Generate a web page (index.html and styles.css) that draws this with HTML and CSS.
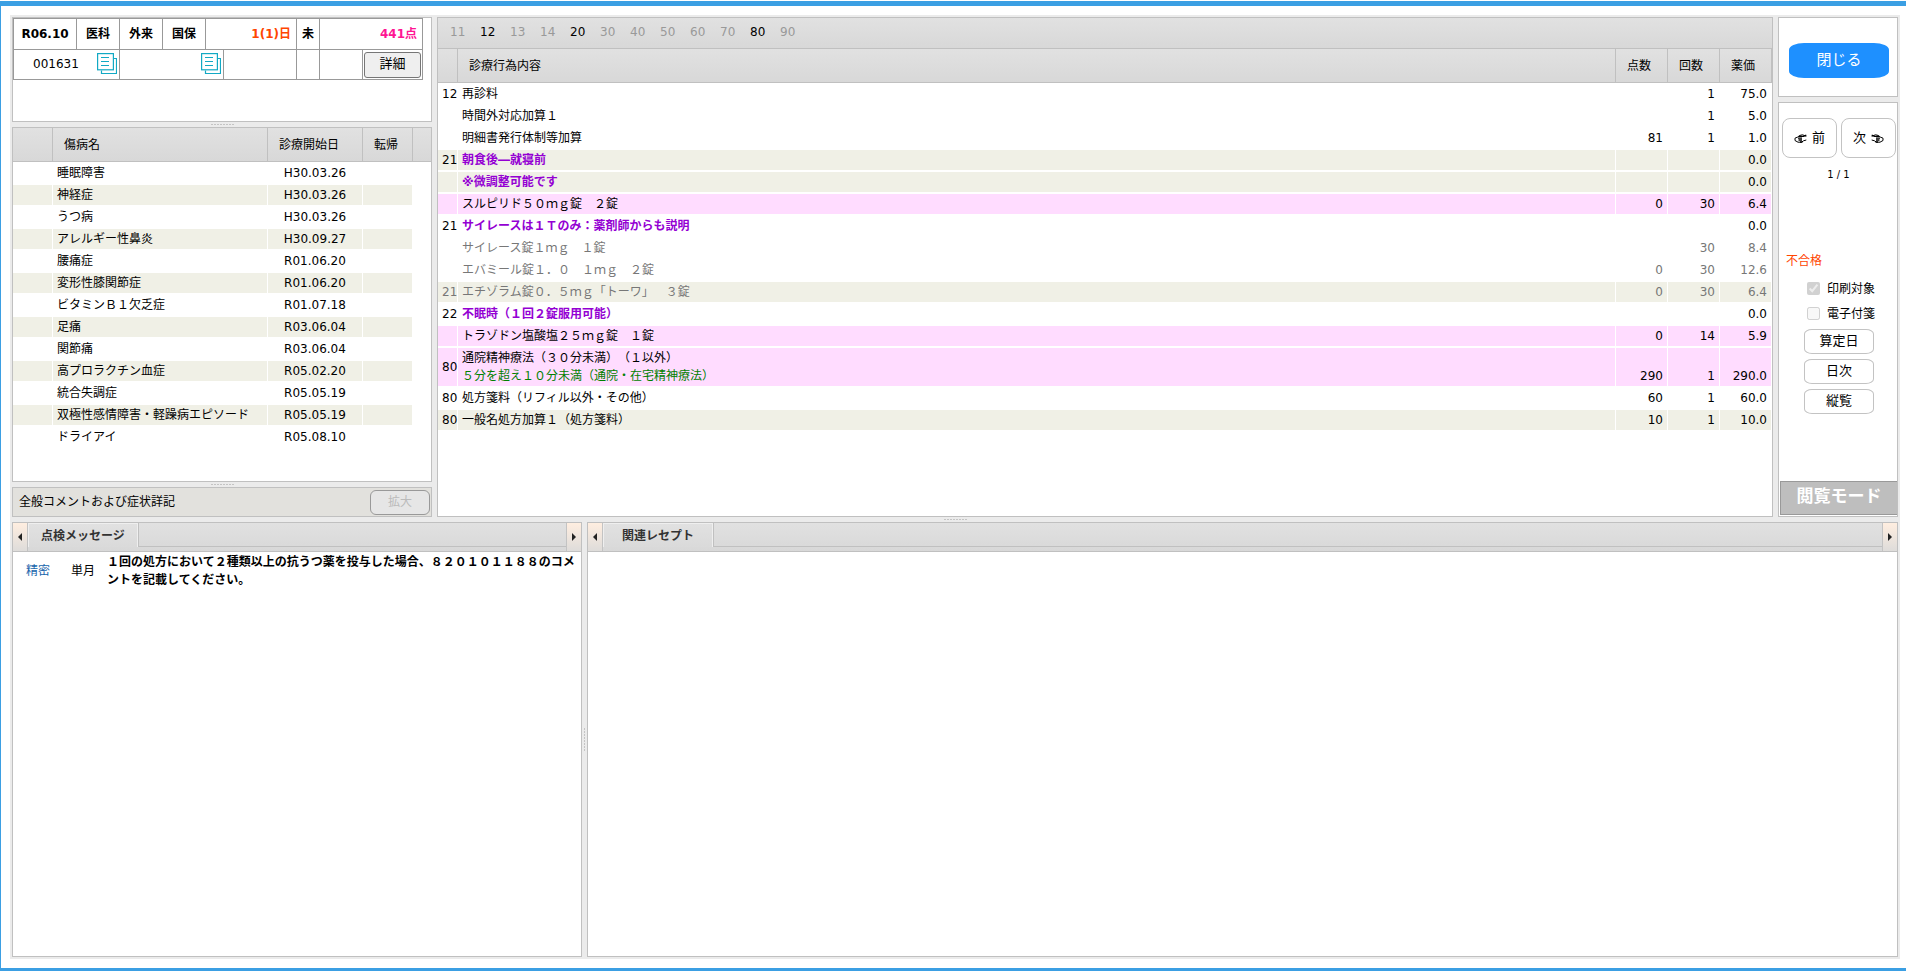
FILE: index.html
```html
<!DOCTYPE html>
<html lang="ja">
<head>
<meta charset="utf-8">
<title>レセプト閲覧</title>
<link rel="stylesheet" href="styles.css">
</head>
<body>
<svg class="sprite" aria-hidden="true">
  <symbol id="copy" viewBox="0 0 20 22">
    <path d="M17 5.5H19.5V20.5H4.500V17.500" fill="none" stroke="#12a9c4" stroke-width="1.200"/>
    <rect x="0.600" y="0.600" width="15.800" height="16.200" fill="#fff" stroke="#12a9c4" stroke-width="1.200"/>
    <path d="M4 4.500H12M4 8.500H12M4 12.500H12" stroke="#12a9c4" stroke-width="1"/>
  </symbol>
  <symbol id="hand" viewBox="0 0 13 9">
    <path d="M12.300 2.300 8.500 0.800 5.500 1.500 3.800 3 1 4.200V6.500L4 8.200H7.500L9.500 6.800 12.300 6" fill="#fff" stroke="#000" stroke-width="1"/>
    <path d="M5 2.300H9.500L12.300 1.200M4 4.200H8M4.500 6H8M6 8H8.500" fill="none" stroke="#000" stroke-width="1.300"/>
  </symbol>
</svg>
<main class="page">
  <div class="frame">
    <div class="upper">
      <div class="left">
        <section class="panel patient">
          <table class="summary">
            <colgroup><col class="s63"><col class="s43"><col class="s43"><col class="s43"><col class="s18"><col class="s74"><col class="s23"><col class="s43"><col class="s60"></colgroup>
            <tr class="first">
              <th>R06.10</th><th>医科</th><th>外来</th><th>国保</th>
              <th colspan="2" class="days">1(1)日</th><th>未</th><th colspan="2" class="points">441点</th>
            </tr>
            <tr class="second">
              <td colspan="2"><div class="idcell"><span>001631</span><svg class="copy"><use href="#copy"/></svg></div></td>
              <td colspan="3"><div class="idcell end"><svg class="copy"><use href="#copy"/></svg></div></td>
              <td></td><td></td><td></td>
              <td><button class="detail">詳細</button></td>
            </tr>
          </table>
        </section>
        <div class="split"><i class="grip"></i></div>
        <section class="panel diseases">
          <table class="grid">
            <colgroup><col class="d-mark"><col><col class="d-date"><col class="d-out"><col class="d-pad"></colgroup>
            <thead><tr><th></th><th>傷病名</th><th>診療開始日</th><th>転帰</th><th class="last"></th></tr></thead>
            <tbody>
              <tr><td></td><td>睡眠障害</td><td class="date">H30.03.26</td><td></td><td class="pad"></td></tr>
              <tr class="alt"><td></td><td>神経症</td><td class="date">H30.03.26</td><td></td><td class="pad"></td></tr>
              <tr><td></td><td>うつ病</td><td class="date">H30.03.26</td><td></td><td class="pad"></td></tr>
              <tr class="alt"><td></td><td>アレルギー性鼻炎</td><td class="date">H30.09.27</td><td></td><td class="pad"></td></tr>
              <tr><td></td><td>腰痛症</td><td class="date">R01.06.20</td><td></td><td class="pad"></td></tr>
              <tr class="alt"><td></td><td>変形性膝関節症</td><td class="date">R01.06.20</td><td></td><td class="pad"></td></tr>
              <tr><td></td><td>ビタミンＢ１欠乏症</td><td class="date">R01.07.18</td><td></td><td class="pad"></td></tr>
              <tr class="alt"><td></td><td>足痛</td><td class="date">R03.06.04</td><td></td><td class="pad"></td></tr>
              <tr><td></td><td>関節痛</td><td class="date">R03.06.04</td><td></td><td class="pad"></td></tr>
              <tr class="alt"><td></td><td>高プロラクチン血症</td><td class="date">R05.02.20</td><td></td><td class="pad"></td></tr>
              <tr><td></td><td>統合失調症</td><td class="date">R05.05.19</td><td></td><td class="pad"></td></tr>
              <tr class="alt"><td></td><td>双極性感情障害・軽躁病エピソード</td><td class="date">R05.05.19</td><td></td><td class="pad"></td></tr>
              <tr><td></td><td>ドライアイ</td><td class="date">R05.08.10</td><td></td><td class="pad"></td></tr>
            </tbody>
          </table>
        </section>
        <div class="split"><i class="grip"></i></div>
        <section class="panel comment"><span>全般コメントおよび症状詳記</span><button class="expand" disabled>拡大</button></section>
      </div>

      <section class="panel acts">
        <nav class="codes">
          <span>11</span><span class="on">12</span><span>13</span><span>14</span><span class="on">20</span><span>30</span><span>40</span><span>50</span><span>60</span><span>70</span><span class="on">80</span><span>90</span>
        </nav>
        <table class="grid">
          <colgroup><col class="a-code"><col><col class="a-num"><col class="a-num"><col class="a-num"></colgroup>
          <thead><tr><th></th><th>診療行為内容</th><th>点数</th><th>回数</th><th>薬価</th></tr></thead>
          <tbody>
            <tr><td>12</td><td>再診料</td><td class="n"></td><td class="n">1</td><td class="n">75.0</td></tr>
            <tr><td></td><td>時間外対応加算１</td><td class="n"></td><td class="n">1</td><td class="n">5.0</td></tr>
            <tr><td></td><td>明細書発行体制等加算</td><td class="n">81</td><td class="n">1</td><td class="n">1.0</td></tr>
            <tr class="alt"><td>21</td><td class="usage">朝食後―就寝前</td><td class="n"></td><td class="n"></td><td class="n">0.0</td></tr>
            <tr class="alt"><td></td><td class="usage">※微調整可能です</td><td class="n"></td><td class="n"></td><td class="n">0.0</td></tr>
            <tr class="pink"><td></td><td>スルピリド５０ｍｇ錠　２錠</td><td class="n">0</td><td class="n">30</td><td class="n">6.4</td></tr>
            <tr><td>21</td><td class="usage">サイレースは１Ｔのみ：薬剤師からも説明</td><td class="n"></td><td class="n"></td><td class="n">0.0</td></tr>
            <tr class="dim"><td></td><td>サイレース錠１ｍｇ　１錠</td><td class="n"></td><td class="n">30</td><td class="n">8.4</td></tr>
            <tr class="dim"><td></td><td>エバミール錠１．０　１ｍｇ　２錠</td><td class="n">0</td><td class="n">30</td><td class="n">12.6</td></tr>
            <tr class="alt dim"><td>21</td><td>エチゾラム錠０．５ｍｇ「トーワ」　３錠</td><td class="n">0</td><td class="n">30</td><td class="n">6.4</td></tr>
            <tr><td>22</td><td class="usage">不眠時（１回２錠服用可能）</td><td class="n"></td><td class="n"></td><td class="n">0.0</td></tr>
            <tr class="pink"><td></td><td>トラゾドン塩酸塩２５ｍｇ錠　１錠</td><td class="n">0</td><td class="n">14</td><td class="n">5.9</td></tr>
            <tr class="pink"><td>80</td><td>通院精神療法（３０分未満）（１以外）<div class="note">５分を超え１０分未満（通院・在宅精神療法）</div></td><td class="n">290</td><td class="n">1</td><td class="n">290.0</td></tr>
            <tr><td>80</td><td>処方箋料（リフィル以外・その他）</td><td class="n">60</td><td class="n">1</td><td class="n">60.0</td></tr>
            <tr class="alt"><td>80</td><td>一般名処方加算１（処方箋料）</td><td class="n">10</td><td class="n">1</td><td class="n">10.0</td></tr>
          </tbody>
        </table>
      </section>

      <aside class="side">
        <section class="panel closebox"><button class="close">閉じる</button></section>
        <section class="panel tools">
          <div class="pager">
            <button><svg class="hand"><use href="#hand"/></svg>前</button>
            <button>次<svg class="hand flip"><use href="#hand"/></svg></button>
          </div>
          <div class="count">1 / 1</div>
          <div class="status">不合格</div>
          <div class="checks">
            <label><input type="checkbox" checked disabled>印刷対象</label>
            <label><input type="checkbox" disabled>電子付箋</label>
          </div>
          <div class="jumps"><button>算定日</button><button>日次</button><button>縦覧</button></div>
          <div class="mode">閲覧モード</div>
        </section>
      </aside>
    </div>
    <div class="split center"><i class="grip"></i></div>
    <div class="lower">
      <section class="panel messages">
        <div class="tabbar">
          <button class="scroll prev" aria-label="前のタブ"></button>
          <div class="strip"><button class="tab">点検メッセージ</button></div>
          <button class="scroll next" aria-label="次のタブ"></button>
        </div>
        <div class="message">
          <a href="#">精密</a><span>単月</span>
          <p>１回の処方において２種類以上の抗うつ薬を投与した場合、８２０１０１１８８のコメントを記載してください。</p>
        </div>
      </section>
      <div class="vsplit"><i class="vgrip"></i></div>
      <section class="panel related">
        <div class="tabbar">
          <button class="scroll prev" aria-label="前のタブ"></button>
          <div class="strip"><button class="tab">関連レセプト</button></div>
          <button class="scroll next" aria-label="次のタブ"></button>
        </div>
      </section>
    </div>
  </div>
</main>
</body>
</html>
```
FILE: styles.css
```css
* { box-sizing: border-box; }

body {
  margin: 0;
  padding-top: 1px;
  min-height: 100vh;
  display: flex;
  flex-direction: column;
  background: #fff;
  color: #000;
  font: 12px/18px "DejaVu Sans", "Noto Sans CJK JP", sans-serif;
  text-spacing-trim: space-all;
}

button {
  font: inherit;
  color: inherit;
  padding: 0;
  background: #fff;
  border: 1px solid #c3c3c3;
}

.sprite { position: absolute; width: 0; height: 0; }

.page {
  flex: 1;
  display: flex;
  border: solid #3b9fe3;
  border-width: 5px 0 3px 1px;
  padding: 9px 6px 9px 9px;
}

.frame {
  flex: 1;
  min-width: 0;
  display: flex;
  flex-direction: column;
  padding: 2px;
  background: #ebebeb;
}

.panel { background: #fff; border: 1px solid #c0c0c0; }

.upper { display: grid; grid-template-columns: 420px minmax(0, 1fr) 120px; gap: 5px; }
.left { display: flex; flex-direction: column; }
.lower { flex: 1; display: flex; }

/* splitters */
.split, .vsplit { display: flex; align-items: center; justify-content: center; }
.split { height: 5px; }
.vsplit { width: 5px; }
.grip {
  width: 23px;
  height: 1px;
  background: repeating-linear-gradient(90deg, #c4c4c4 0 2px, transparent 2px 3px);
}
.vgrip {
  width: 1px;
  height: 23px;
  background: repeating-linear-gradient(#c4c4c4 0 2px, transparent 2px 3px);
}

/* patient summary */
.patient { min-height: 105px; }
.summary { width: 410px; table-layout: fixed; border-collapse: collapse; }
.summary th, .summary td { border: 1px solid #999; padding: 0; }
.summary th { text-align: center; }
.summary .days { text-align: right; padding-right: 5px; color: #ff4500; }
.summary .points { text-align: right; padding-right: 5px; color: #ff1493; }
.first { height: 31px; }
.second { height: 30px; }
.s63 { width: 63px; }
.s43 { width: 43px; }
.s18 { width: 18px; }
.s74 { width: 73px; }
.s23 { width: 23px; }
.s60 { width: 60px; }
.idcell { display: flex; align-items: center; justify-content: space-between; padding: 0 2px 2px 19px; }
.idcell.end { justify-content: flex-end; }
.copy { width: 20px; height: 22px; }
.detail {
  display: block;
  width: 57px;
  height: 26px;
  margin: 0 auto;
  padding-bottom: 2px;
  background: #efefef;
  border-color: #767676;
  border-radius: 3px;
  font-size: 13px;
}

/* data grids */
.grid { width: 100%; table-layout: fixed; border-collapse: separate; border-spacing: 0; }
.grid th {
  height: 34px;
  padding: 0 0 0 11px;
  font-weight: normal;
  text-align: left;
  background: linear-gradient(#e1e1e1, #d8d8d8);
  border-right: 1px solid #c0c0c0;
  border-bottom: 1px solid #c0c0c0;
}
.grid th.last { border-right: 0; }
.grid td {
  height: 22px;
  padding: 1px 4px;
  border: solid #fff;
  border-width: 1px 1px 1px 0;
  white-space: nowrap;
}
.alt td { background: #f0f0e6; }
.pink td { background: #ffdcff; }
.grid .pad { background: #fff; border-right: 0; }
.grid .date { text-align: center; }
.grid .n { text-align: right; vertical-align: bottom; }
.dim { color: #777; }
.usage { font-weight: bold; color: #9400d3; }
.note { color: #008000; }

.diseases { min-height: 355px; }
.d-mark { width: 40px; }
.d-date { width: 95px; }
.d-out { width: 50px; }
.d-pad { width: 18px; }
.a-code { width: 20px; }
.a-num { width: 52px; }
.acts td:first-child { padding-right: 0; }

.comment {
  height: 30px;
  display: flex;
  align-items: center;
  justify-content: space-between;
  padding: 0 1px 0 6px;
  background: #e2e1dd;
}
.expand {
  width: 60px;
  height: 25px;
  background: #e6e6e6;
  border-color: #999;
  border-radius: 6px;
  color: #bbb;
}

.codes {
  height: 31px;
  display: flex;
  gap: 15px;
  padding: 5px 12px;
  background: linear-gradient(#e1e1e1, #d8d8d8);
  border-bottom: 1px solid #c0c0c0;
  color: #999;
}
.codes span { width: 15px; }
.codes .on { color: #000; }

/* right column */
.side { display: flex; flex-direction: column; gap: 5px; }
.closebox { height: 80px; padding: 25px 0 0 2px; text-align: center; }
.close {
  width: 100px;
  height: 35px;
  padding-bottom: 2px;
  border: 0;
  border-radius: 15px / 7px;
  background: #1e90ff;
  color: #fff;
  font-size: 15px;
}
.tools { flex: 1; display: flex; flex-direction: column; padding: 15px 0 1px 1px; }
.pager { display: flex; gap: 4px; padding-left: 2px; }
.pager button {
  width: 55px;
  height: 40px;
  display: flex;
  align-items: center;
  justify-content: center;
  gap: 5px;
  border-radius: 8px;
  font-size: 13px;
}
.hand { width: 13px; height: 9px; }
.hand.flip { transform: scaleX(-1); }
.count { margin-top: 8px; text-align: center; font-size: 10px; }
.status { margin-top: 68px; padding-left: 6px; color: #ff4500; }
.checks { display: flex; flex-direction: column; gap: 7px; margin-top: 10px; padding-left: 27px; }
.checks label { display: flex; align-items: center; gap: 7px; }
.checks input { width: 13px; height: 13px; margin: 0 0 2px; }
.jumps { display: flex; flex-direction: column; gap: 5px; margin-top: 6px; padding-left: 24px; }
.jumps button { width: 70px; height: 25px; padding-bottom: 2px; border-radius: 8px / 5px; font-size: 13px; }
.mode {
  height: 34px;
  margin-top: auto;
  padding-top: 5px;
  background: #bebebe;
  border: 1px solid #999;
  border-right: 0;
  color: #fff;
  text-align: center;
  font-size: 17px;
  font-weight: bold;
}

/* lower tab panels */
.messages { flex: 0 0 570px; }
.related { flex: 1; }
.tabbar {
  height: 29px;
  display: flex;
  background: linear-gradient(#e1e1e1, #d8d8d8);
  border-bottom: 1px solid #c0c0c0;
}
.strip { flex: 1; height: 24px; display: flex; border-bottom: 1px solid #c0c0c0; }
.tab {
  width: 110px;
  height: 24px;
  background: linear-gradient(#e1e1e1, #dadada);
  border: solid #efefef;
  border-width: 1px 1px 0;
  box-shadow: 1px 0 #c0c0c0;
  color: #333;
  font-weight: bold;
}
.scroll {
  width: 15px;
  height: 28px;
  display: flex;
  align-items: center;
  justify-content: center;
  border-width: 0;
  background: linear-gradient(#ffeee0, #dedcda);
}
.scroll.prev { border-right-width: 1px; }
.scroll.next { border-left-width: 1px; }
.scroll::before { content: ""; border: solid transparent; border-width: 4px 0; }
.scroll.prev::before { border-right: 4px solid #222; }
.scroll.next::before { border-left: 4px solid #222; }

.message { display: flex; align-items: center; padding: 1px 5px 0 13px; }
.message a { width: 45px; color: #1764ab; text-decoration: none; }
.message span { width: 36px; }
.message p { flex: 1; margin: 0; font-weight: bold; }
```
